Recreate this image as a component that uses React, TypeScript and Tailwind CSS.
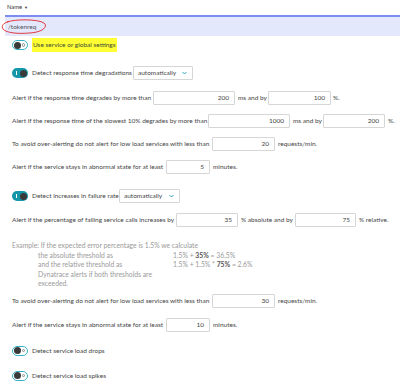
import React from "react";

const font = { fontFamily: "Lato, 'Liberation Sans', sans-serif" };

function Toggle({ on }: { on: boolean }) {
  if (on) {
    return (
      <div className="relative w-[16px] h-[10px] rounded-full bg-[#1497a8] shrink-0">
        <div className="absolute left-[4px] top-[3px] w-[1px] h-[4px] bg-white" />
        <div className="absolute right-[1.5px] top-[1.5px] w-[7px] h-[7px] rounded-full bg-[#3a3a3a]" />
      </div>
    );
  }
  return (
    <div className="relative w-[16px] h-[10px] rounded-full bg-white border border-[#37b3c4] shrink-0">
      <div className="absolute left-[1px] top-[0.5px] w-[7px] h-[7px] rounded-full bg-[#3a3a3a]" />
      <div className="absolute right-[2px] top-[2px] w-[3.5px] h-[3.5px] rounded-full border border-[#888]" />
    </div>
  );
}

function Input({ w, v }: { w: number; v: string }) {
  return (
    <div
      className="h-[14px] border border-[#d6d6d6] rounded-[1px] bg-white flex items-center justify-end pr-[5px] shrink-0"
      style={{ width: w }}
    >
      {v}
    </div>
  );
}

function Dropdown({ w }: { w: number }) {
  return (
    <div
      className="h-[14px] border border-[#d6d6d6] rounded-[1px] bg-white flex items-center justify-between pl-[4px] pr-[5px] shrink-0"
      style={{ width: w }}
    >
      <span>automatically</span>
      <svg width="5" height="4" viewBox="0 0 5 4">
        <path d="M0.5 1 L2.5 3 L4.5 1" fill="none" stroke="#1aa3b5" strokeWidth="0.9" />
      </svg>
    </div>
  );
}

function Row({ children, mt }: { children: React.ReactNode; mt: number }) {
  return (
    <div className="flex items-center h-[14px] pl-[12px] whitespace-nowrap" style={{ marginTop: mt }}>
      {children}
    </div>
  );
}

export default function App() {
  return (
    <div className="w-[400px] h-[385px] bg-white text-[#454646] text-[6.5px] overflow-hidden" style={font}>
      <div className="h-[15px] flex items-center pl-[7px] text-[5.8px] text-[#333]">
        Name <span className="ml-[2px] text-[4px]">▼</span>
      </div>
      <div className="ml-[5px] h-[2px] bg-[#7b8df0]" />
      <div className="relative ml-[5px] h-[19px] bg-[#e3e8fc] flex items-center pl-[3px] text-[6.5px] text-[#555]">
        /tokenreq
        <svg className="absolute left-[-5px] top-0" width="50" height="19" viewBox="0 0 50 19">
          <path
            d="M7 5 C 15 2, 38 2, 44 6 C 48 9, 44 15, 30 16 C 18 17, 6 16, 3 12 C 1 9, 3 6, 9 4.5"
            fill="none"
            stroke="#e0262b"
            strokeWidth="0.9"
          />
        </svg>
      </div>
      <Row mt={2}>
        <Toggle on={false} />
        <span className="ml-[4px] bg-[#ffff33] px-[1px] py-[2px] text-[#3c4a3a]">Use service or global settings</span>
      </Row>
      <Row mt={14}>
        <Toggle on />
        <span className="ml-[4px] w-[101px]">Detect response time degradations</span>
        <Dropdown w={60} />
      </Row>
      <Row mt={11}>
        <span className="w-[141px]">Alert if the response time degrades by more than</span>
        <Input w={82} v="200" />
        <span className="w-[33px] pl-[3px]">ms and by</span>
        <Input w={63} v="100" />
        <span className="ml-[2px]">%.</span>
      </Row>
      <Row mt={9}>
        <span className="w-[196px]">Alert if the response time of the slowest 10% degrades by more than</span>
        <Input w={82} v="1000" />
        <span className="w-[33px] pl-[3px]">ms and by</span>
        <Input w={62} v="200" />
        <span className="ml-[3px]">%.</span>
      </Row>
      <Row mt={9}>
        <span className="w-[200px]">To avoid over-alerting do not alert for low load services with less than</span>
        <Input w={63} v="20" />
        <span className="ml-[3px]">requests/min.</span>
      </Row>
      <Row mt={9}>
        <span className="w-[154px]">Alert if the service stays in abnormal state for at least</span>
        <Input w={44} v="5" />
        <span className="ml-[3px]">minutes.</span>
      </Row>
      <Row mt={15}>
        <Toggle on />
        <span className="ml-[4px] w-[87px]">Detect increases in failure rate</span>
        <Dropdown w={61} />
      </Row>
      <Row mt={10}>
        <span className="w-[164px]">Alert if the percentage of failing service calls increases by</span>
        <Input w={62} v="35" />
        <span className="w-[57px] pl-[3px]">% absolute and by</span>
        <Input w={61} v="75" />
        <span className="ml-[3px]">% relative.</span>
      </Row>
      <div className="mt-[14px] pl-[12px] text-[#9a9a9a] text-[6.8px] leading-[9.5px] whitespace-nowrap">
        <div>Example: If the expected error percentage is 1.5% we calculate</div>
        <div className="flex">
          <div className="w-[161px] pl-[26px]">the absolute threshold as</div>
          <div>
            1.5% + <b className="text-[#555]">35%</b> = 36.5%
          </div>
        </div>
        <div className="flex">
          <div className="w-[161px] pl-[26px]">and the relative threshold as</div>
          <div>
            1.5% + 1.5% * <b className="text-[#555]">75%</b> = 2.6%
          </div>
        </div>
        <div className="pl-[26px]">Dynatrace alerts if both thresholds are</div>
        <div className="pl-[26px]">exceeded.</div>
      </div>
      <Row mt={5}>
        <span className="w-[200px]">To avoid over-alerting do not alert for low load services with less than</span>
        <Input w={63} v="30" />
        <span className="ml-[3px]">requests/min.</span>
      </Row>
      <Row mt={10}>
        <span className="w-[154px]">Alert if the service stays in abnormal state for at least</span>
        <Input w={44} v="10" />
        <span className="ml-[3px]">minutes.</span>
      </Row>
      <Row mt={12}>
        <Toggle on={false} />
        <span className="ml-[4px]">Detect service load drops</span>
      </Row>
      <Row mt={11}>
        <Toggle on={false} />
        <span className="ml-[4px]">Detect service load spikes</span>
      </Row>
    </div>
  );
}
